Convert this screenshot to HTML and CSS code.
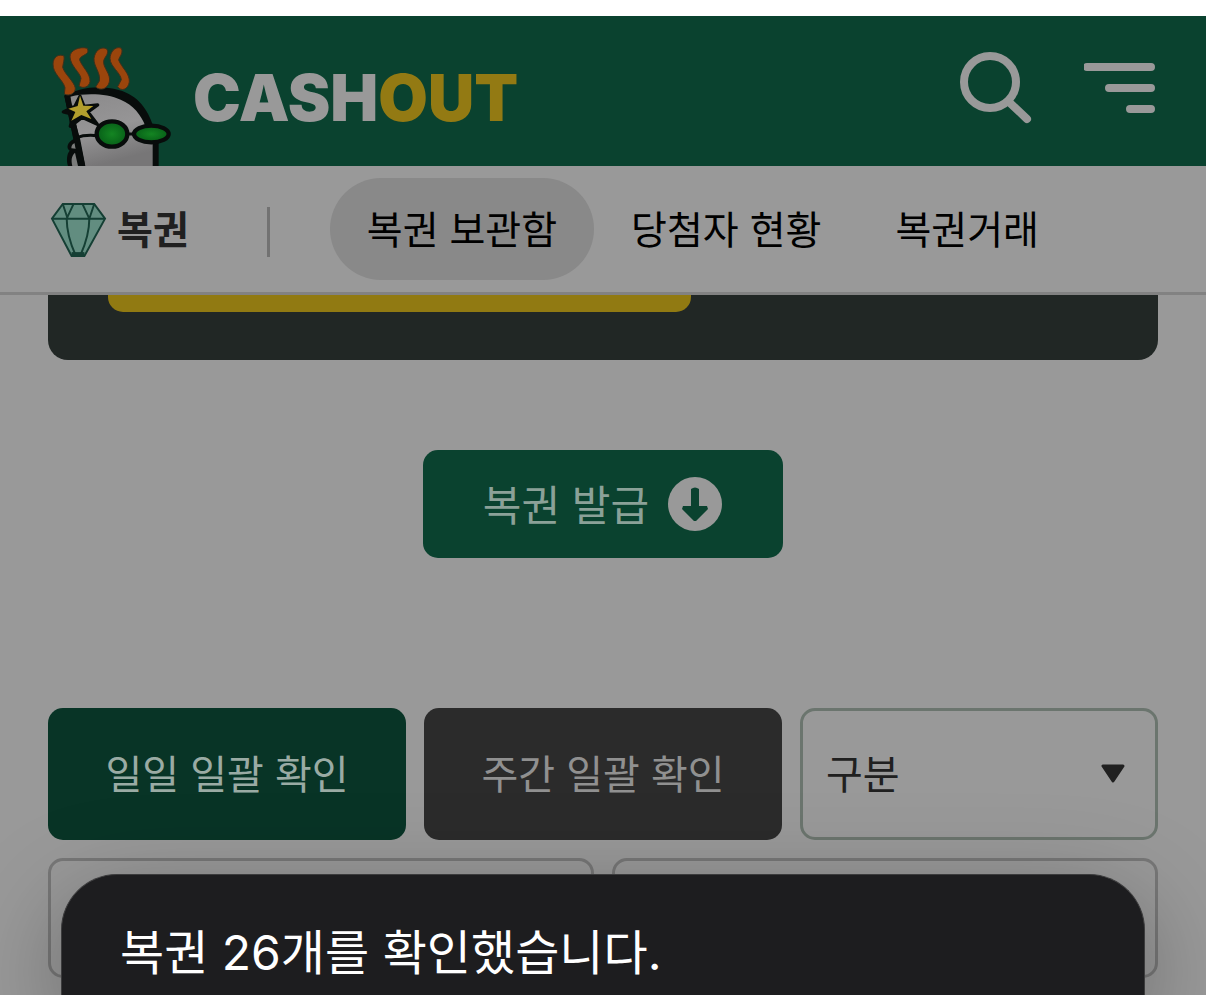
FILE: index.html
```html
<!DOCTYPE html>
<html lang="ko">
<head>
<meta charset="utf-8">
<meta name="viewport" content="width=device-width, initial-scale=1">
<title>CASHOUT 복권 보관함</title>
<link rel="stylesheet" href="styles.css">
</head>
<body>
<header class="header">
  <a class="brand" href="#" aria-label="CASHOUT">
    <svg class="mascot" viewBox="60 132 366 366" aria-hidden="true">
      <defs>
        <linearGradient id="face" x1="0" y1="0" x2="0.3" y2="1">
          <stop offset="0" stop-color="#8b8a8b"/><stop offset="0.55" stop-color="#969596"/><stop offset="1" stop-color="#777677"/>
        </linearGradient>
        <radialGradient id="lens"><stop offset="0" stop-color="#148522"/><stop offset="1" stop-color="#075f18"/></radialGradient>
      </defs>
      <path d="M114 498C109 482 110 462 119 452C107 444 112 428 130 418L103 287C150 262 210 254 266 270C326 286 354 332 368 374L386 430V498Z" fill="#080c0b"/>
      <path d="M121 290C170 278 232 281 272 299C310 314 334 346 346 378L368 433L368 498H166L151 420L124 320Z" fill="url(#face)"/>
      <path d="M127 498C123 481 124 468 135 458L144 498ZM124 445C124 436 128 431 135 429L138 446Z" fill="#7b7c7b"/>
      <path d="M111 285L157 498" stroke="#080c0b" stroke-width="17" fill="none"/>
      <path d="M140 413Q165 403 202 407M296 402H316" stroke="#080c0b" stroke-width="9" fill="none"/>
      <ellipse cx="246" cy="402" rx="46" ry="38" fill="url(#lens)" stroke="#080c0b" stroke-width="13"/>
      <ellipse cx="364" cy="402" rx="52" ry="25" fill="url(#lens)" stroke="#080c0b" stroke-width="13"/>
      <path d="M150 289L162 319L203 315L174 336L202 373L156 352L121 379L130 343L100 336L135 319Z" fill="#080c0b" stroke="#080c0b" stroke-width="10" stroke-linejoin="round"/>
      <path d="M150 287L160 317L190 318L169 334L184 357L154 345L124 362L136 336L115 326L143 318Z" fill="#b39f2d"/>
      <g fill="#9b450c" stroke="#3e311c" stroke-width="3" stroke-linejoin="round">
        <path d="M102 168C87 160 69 171 69 192C68 221 99 239 105 263L103 282C118 290 137 280 136 264C132 244 105 224 98 202C99 191 104 180 102 168Z"/>
        <path d="M172 145C149 138 119 151 120 171C122 198 149 216 153 235L147 258C160 267 177 261 180 245C182 221 157 202 149 180C148 167 174 165 174 153Z"/>
        <path d="M229 146C211 138 195 154 192 175C190 199 213 218 208 243L197 261C211 273 232 268 238 246C244 222 218 203 221 183C223 171 236 164 232 150Z"/>
        <path d="M273 144C255 138 240 157 240 176C241 200 272 218 274 239L263 260C273 275 294 270 298 246C300 221 274 202 266 180C268 169 278 164 276 150Z"/>
      </g>
    </svg>
    <span class="wordmark">CASH<span class="wordmark-accent">OUT</span></span>
  </a>
  <div class="header-tools">
    <button class="icon-button" type="button" aria-label="검색">
      <svg width="72" height="72" viewBox="0 0 72 72" fill="none" stroke="#999999"><circle cx="30" cy="30" r="26" stroke-width="8"/><path d="M49 50L67 67" stroke-width="8" stroke-linecap="round"/></svg>
    </button>
    <button class="icon-button" type="button" aria-label="메뉴">
      <svg width="72" height="72" viewBox="0 0 72 72" fill="none" stroke="#999999" stroke-width="8" stroke-linecap="round"><path d="M3 15H67M25 36H67M46 57H67"/></svg>
    </button>
  </div>
</header>

<nav class="nav" aria-label="복권">
  <a class="nav-title" href="#">
    <svg class="gem" viewBox="0 0 58 58" aria-hidden="true">
      <path d="M13 3H45L56 18L35 56H22L2 18Z" fill="#628d80" stroke="#153f34" stroke-width="2"/>
      <path d="M2 18H56" stroke="#153f34" stroke-width="2"/>
      <path d="M13 3L18 18M24 3L17 18Q17 35 26 55M33 3L40 18Q40 35 31 55M45 3L40 18" fill="none" stroke="#153f34" stroke-width="2"/>
      <path d="M22 54H35" stroke="#153f34" stroke-width="4"/>
    </svg>
    <span class="nav-label">복권</span>
  </a>
  <span class="nav-divider"></span>
  <div class="tabs">
    <a class="tab tab-active" href="#" aria-current="page">복권 보관함</a>
    <a class="tab" href="#">당첨자 현황</a>
    <a class="tab" href="#">복권거래</a>
  </div>
</nav>

<main class="content">
  <section class="banner"><div class="banner-bar"></div></section>
  <button class="issue" type="button"><span class="issue-label">복권 발급</span>
    <svg width="56" height="56" viewBox="0 0 56 56" aria-hidden="true"><circle cx="28" cy="28" r="27" fill="#999999"/><path d="M24 13Q28 10 32 13V30H40L41 33L29 45H27L15 33L16 30H24Z" fill="#0a422f"/></svg>
  </button>
  <div class="filters">
    <button class="filter-button daily" type="button">일일 일괄 확인</button>
    <button class="filter-button weekly" type="button">주간 일괄 확인</button>
    <div class="select-box">
      <select class="select" aria-label="구분"><option>구분</option></select>
      <svg class="caret" width="24" height="20" viewBox="0 0 24 20" aria-hidden="true"><path d="M2 2H22L12 17Z" fill="#202020" stroke="#202020" stroke-width="3" stroke-linejoin="round"/></svg>
    </div>
  </div>
  <div class="fields">
    <input class="field" type="text" aria-label="시작일">
    <input class="field" type="text" aria-label="종료일">
  </div>
</main>

<div class="alert" role="alertdialog" aria-labelledby="alert-text">
  <p class="alert-text" id="alert-text">복권 26개를 확인했습니다.</p>
</div>
</body>
</html>
```
FILE: styles.css
```css
* { box-sizing: border-box; }

body {
  margin: 0;
  padding-top: 16px;
  min-height: 100vh;
  position: relative;
  overflow: hidden;
  background: linear-gradient(#ffffff 16px, #999999 16px);
  font-family: "Noto Sans CJK KR", sans-serif;
  font-size: 40px;
  line-height: 60px;
}

a { color: inherit; text-decoration: none; }
button, select, input { font: inherit; }
svg { display: block; flex: none; }

.header {
  display: flex;
  justify-content: space-between;
  height: 150px;
  padding: 0 50px;
  background: #0a422f;
}
.brand { display: flex; align-items: flex-end; gap: 21px; }
.mascot { width: 122px; height: 122px; }
.wordmark {
  align-self: center;
  padding-top: 14px;
  color: #999999;
  font-family: Inter, sans-serif;
  font-size: 64px;
  font-weight: 900;
}
.wordmark-accent { color: #937a13; }
.header-tools { display: flex; align-items: center; gap: 52px; padding-bottom: 6px; }
.icon-button { padding: 0; border: 0; background: none; }

.nav {
  display: flex;
  align-items: center;
  height: 129px;
  padding: 0 50px;
  border-bottom: 3px solid #828282;
  font-size: 39px;
  white-space: nowrap;
}
.nav-title { display: flex; align-items: center; gap: 10px; color: #202020; font-weight: 700; }
.nav-label { padding-bottom: 4px; }
.gem { width: 57px; height: 57px; }
.nav-divider { width: 3px; height: 50px; margin: 6px 60px 0 78px; background: #727272; }
.tabs { display: flex; }
.tab { padding: 18px 37px 22px; border-radius: 51px; color: #000000; line-height: 62px; }
.tab-active { background: #898989; }

.content { display: flex; flex-direction: column; padding: 0 48px; }
.banner { height: 65px; padding-left: 60px; border-radius: 0 0 20px 20px; background: #212725; }
.banner-bar { width: 583px; height: 17px; border-radius: 0 0 15px 15px; background: #917a12; }
.issue {
  display: flex;
  align-items: center;
  align-self: center;
  gap: 18px;
  height: 108px;
  margin: 90px 0 150px;
  padding: 0 60px;
  border: 0;
  border-radius: 15px;
  background: #0a422f;
  color: #8ba198;
  font-size: 42px;
}
.issue-label { padding-bottom: 2px; }
.filters { display: grid; grid-template-columns: repeat(3, 1fr); gap: 18px; }
.filter-button { height: 132px; padding: 0 0 4px; border: 0; border-radius: 15px; }
.daily { background: #083426; color: #9aaba4; }
.weekly { background: #2b2b2b; color: #909090; }
.select-box { position: relative; }
.select {
  width: 100%;
  height: 132px;
  padding: 0 23px 4px;
  appearance: none;
  border: 3px solid #6b756e;
  border-radius: 15px;
  background: transparent;
  color: #202020;
}
.caret { position: absolute; top: 56px; right: 33px; pointer-events: none; }
.fields { display: grid; grid-template-columns: 1fr 1fr; gap: 18px; margin-top: 18px; }
.field {
  width: 100%;
  height: 120px;
  border: 3px solid #777777;
  border-radius: 15px;
  background: transparent;
}

.alert {
  position: absolute;
  top: 874px;
  right: 61px;
  bottom: 0;
  left: 61px;
  padding: 42px 58px 0;
  border: 1px solid #3c3c3d;
  border-bottom: 0;
  border-radius: 56px 56px 0 0;
  background: #1d1d1f;
  box-shadow: 0 30px 100px rgba(0, 0, 0, 0.34);
}
.alert-text {
  margin: 0;
  color: #ffffff;
  font-family: Inter, "Noto Sans CJK KR", sans-serif;
  font-size: 48px;
  line-height: 72px;
}
```
